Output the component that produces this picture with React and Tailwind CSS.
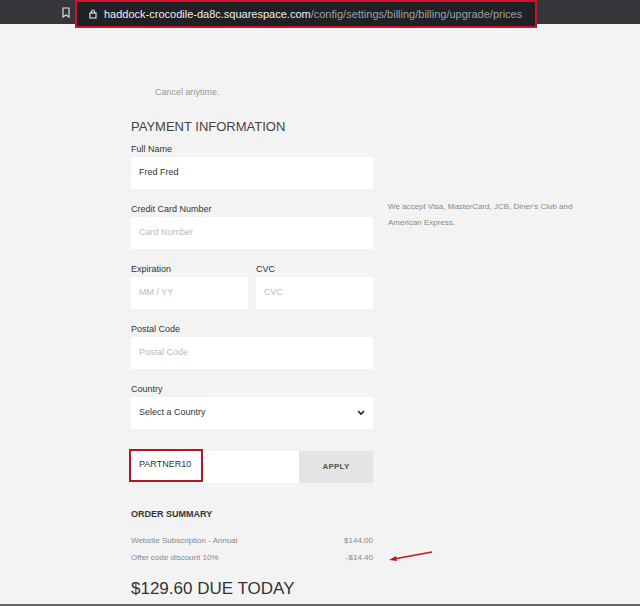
export default function App() {
  const f = { fontFamily: '"Liberation Sans", Arial, sans-serif' };
  const label = "text-[9px] text-[#333] h-[13px] leading-[13px]";
  const input = "bg-white h-[32px] flex items-center px-[8px] text-[9px]";
  return (
    <div style={f} className="w-[640px] h-[606px] bg-[#f3f3f3] relative overflow-hidden">
      <div className="h-[24px] bg-[#35363a] flex items-center">
        <svg className="ml-[62px]" width="8" height="11" viewBox="0 0 8 11"><path d="M1 1h6v9L4 8 1 10z" fill="none" stroke="#ddd" strokeWidth="1.2"/></svg>
        <div className="ml-[5px] h-[28px] w-[462px] border-[2px] border-[#d0112b] bg-[#202124] flex items-center pl-[12px] text-[11px] mt-[4px]">
          <svg width="8" height="10" viewBox="0 0 8 10"><rect x="1" y="4" width="6" height="5" fill="none" stroke="#ddd" strokeWidth="1.2"/><path d="M2.5 4V2.5a1.5 1.5 0 0 1 3 0V4" fill="none" stroke="#ddd" strokeWidth="1.2"/></svg>
          <span className="ml-[7px] text-[#eee]">haddock-crocodile-da8c.squarespace.com</span>
          <span className="text-[#9aa0a6]">/config/settings/billing/billing/upgrade/prices</span>
        </div>
      </div>
      <div className="pl-[131px]">
        <div className="pt-[62px] pl-[24px] text-[9px] text-[#999] h-[93px] shrink-0">Cancel anytime.</div>
        <div className="text-[13px] text-[#444]">PAYMENT INFORMATION</div>
        <div className="flex gap-[15px]">
          <div className="w-[242px] flex flex-col">
            <div className={label + " mt-[6px]"}>Full Name</div>
            <div className={input + " mt-[1px] text-[#333]"}>Fred Fred</div>
            <div className={label + " mt-[14px]"}>Credit Card Number</div>
            <div className={input + " mt-[1px] text-[#bbb]"}>Card Number</div>
            <div className={label + " mt-[14px]"}>
              <div className="flex"><span className="w-[125px]">Expiration</span><span>CVC</span></div>
            </div>
            <div className="flex gap-[8px] mt-[1px]">
              <div className={input + " flex-1 text-[#bbb]"}>MM / YY</div>
              <div className={input + " flex-1 text-[#bbb]"}>CVC</div>
            </div>
            <div className={label + " mt-[14px]"}>Postal Code</div>
            <div className={input + " mt-[1px] text-[#bbb]"}>Postal Code</div>
            <div className={label + " mt-[14px]"}>Country</div>
            <div className={input + " mt-[1px] justify-between text-[#333]"}>
              <span>Select a Country</span>
              <svg width="8" height="6" viewBox="0 0 8 6"><path d="M1 1l3 3 3-3" fill="none" stroke="#222" strokeWidth="1.6"/></svg>
            </div>
            <div className="flex h-[32px] mt-[22px]">
              <div className="flex-1 bg-white relative">
                <div className="absolute left-[-2px] top-[-2px] w-[74px] h-[33px] border-[2px] border-[#b5161f] flex items-center pl-[8px] text-[9px] text-[#333]">PARTNER10</div>
              </div>
              <div className="w-[74px] bg-[#e4e4e4] flex items-center justify-center text-[8px] font-bold tracking-wide text-[#555]">APPLY</div>
            </div>
            <div className="text-[9px] font-bold text-[#333] mt-[25px]">ORDER SUMMARY</div>
            <div className="flex justify-between text-[8px] text-[#888] mt-[14px]"><span>Website Subscription - Annual</span><span>$144.00</span></div>
            <div className="flex justify-between text-[8px] text-[#888] mt-[5px]"><span>Offer code discount 10%</span><span>-$14.40</span></div>
            <div className="text-[17px] text-[#333] mt-[12px]">$129.60 DUE TODAY</div>
          </div>
          <div className="pt-[62px] text-[8px] text-[#888] leading-[16px] w-[200px]">We accept Visa, MasterCard, JCB, Diner's Club and American Express.</div>
        </div>
      </div>
      <svg className="absolute left-[385px] top-[548px]" width="50" height="16" viewBox="0 0 50 16"><path d="M47 4L9 11" stroke="#c4161c" strokeWidth="1.6"/><path d="M4 12l7-4 1 5z" fill="#c4161c"/></svg>
      <div className="absolute left-0 bottom-0 w-full h-[2px] bg-[#666]"></div>
    </div>
  );
}
